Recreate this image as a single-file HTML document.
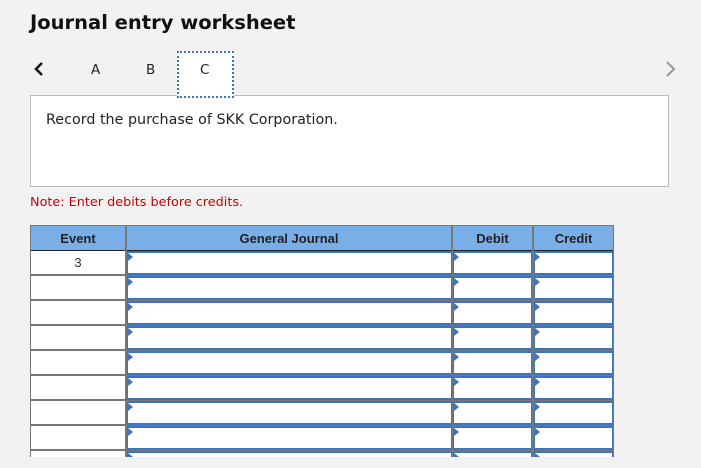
<!DOCTYPE html>
<html><head><style>
body{margin:0;width:701px;height:468px;background:#f2f2f2;position:relative;overflow:hidden;font-family:"DejaVu Sans","Liberation Sans",sans-serif;}
.a{position:absolute}
h1{position:absolute;left:30px;top:11px;margin:0;font-size:19.5px;font-weight:bold;color:#111;}
.tab{position:absolute;top:62px;font-size:13.5px;color:#222;z-index:3}
.tbl{position:absolute;left:30px;top:225px;width:584px;height:232px;overflow:hidden;background:#777}
.hd{position:absolute;top:0;height:25px;background:#7aaee6;border-bottom:1px solid #222;font:bold 13px "Liberation Sans",sans-serif;color:#222;text-align:center;line-height:26px;box-sizing:border-box}
.ev{position:absolute;background:#fff;font:13px "Liberation Sans",sans-serif;color:#333;text-align:center;line-height:24px}
.in{position:absolute;background:#fff;border:1px solid #3c75bd;border-bottom:2px solid #3c75bd;border-top:2px solid #3c75bd;box-sizing:border-box}
.in:before{content:"";position:absolute;left:0;top:0;border-left:5px solid #3c75bd;border-top:4px solid transparent;border-bottom:4px solid transparent}
</style></head><body>
<h1>Journal entry worksheet</h1>
<svg class="a" style="left:33px;top:61px" width="12" height="16"><path d="M9 2 L3 8 L9 14" stroke="#111" stroke-width="2.5" fill="none"/></svg>
<div class="tab" style="left:91px">A</div>
<div class="tab" style="left:146px">B</div>
<div class="a" style="left:30px;top:95px;width:639px;height:92px;background:#fff;border:1px solid #bbb;box-sizing:border-box"></div>
<div class="a" style="left:177px;top:51px;width:57px;height:47px;background:#fff;border:2px dotted #3c75bd;box-sizing:border-box;z-index:2"></div>
<div class="tab" style="left:200px">C</div>
<svg class="a" style="left:664px;top:60px" width="14" height="18"><path d="M3 2 L10 9 L3 16" stroke="#999" stroke-width="2" fill="none"/></svg>
<div class="a" style="left:46px;top:112px;font-size:14.3px;color:#222">Record the purchase of SKK Corporation.</div>
<div class="a" style="left:30px;top:195px;font-size:12.8px;color:#c00">Note: Enter debits before credits.</div>
<div class="tbl" id="t">
<div class="hd" style="left:1px;width:94px;top:1px">Event</div>
<div class="hd" style="left:97px;width:324px;top:1px">General Journal</div>
<div class="hd" style="left:423px;width:79px;top:1px">Debit</div>
<div class="hd" style="left:504px;width:79px;top:1px">Credit</div>
</div>
<script>
var t=document.getElementById('t'),h='';
for(var i=0;i<9;i++){var y=26+25*i;
h+='<div class="ev" style="left:1px;top:'+y+'px;width:94px;height:23px">'+(i==0?'3':'')+'</div>';
h+='<div class="in" style="left:97px;top:'+y+'px;width:325px;height:24px"></div>';
h+='<div class="in" style="left:423px;top:'+y+'px;width:79px;height:24px"></div>';
h+='<div class="in" style="left:504px;top:'+y+'px;width:79px;height:24px"></div>';}
t.insertAdjacentHTML('beforeend',h);
</script>
</body></html>
